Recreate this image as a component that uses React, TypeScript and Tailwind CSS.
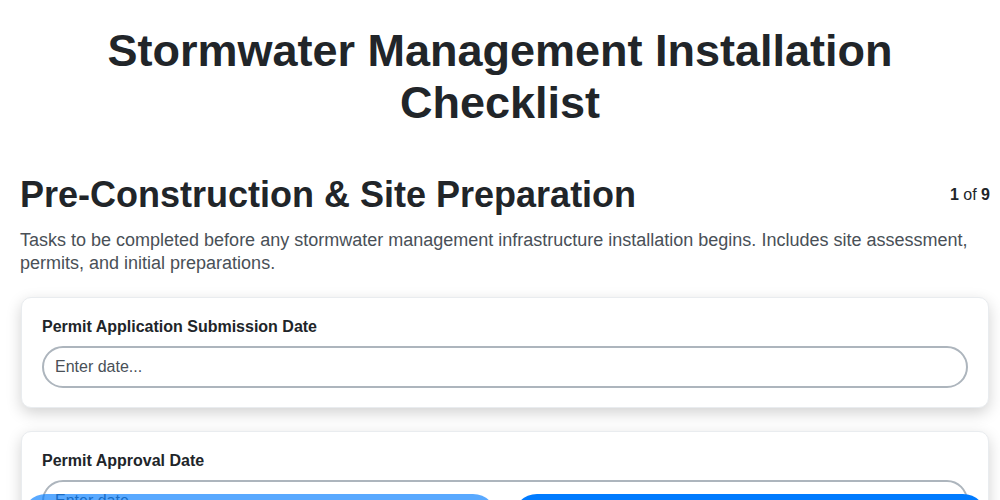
import React from "react";

function Field({ label }: { label: string }) {
  return (
    <div className="rounded-[10px] border border-[#e9ecef] bg-white px-5 pt-[17px] pb-[19px] shadow-[0_5px_15px_rgba(0,0,0,0.18)]">
      <label className="mb-[7px] block text-[16px] font-bold leading-6 text-[#212529]">{label}</label>
      <input
        type="text"
        placeholder="Enter date..."
        className="block h-[42px] w-full rounded-full border-2 border-[#adb5bd] bg-white px-[11px] text-[16px] text-[#212529] placeholder:text-[#495057] outline-none"
      />
    </div>
  );
}

export default function App() {
  return (
    <div className="min-h-screen bg-white font-['Liberation_Sans',Arial,sans-serif] text-[#212529]">
      <div className="px-5">
        <h1 className="mx-auto mt-[25px] max-w-[840px] text-center text-[45px] font-bold leading-[52px] text-[#212529]">
          Stormwater Management Installation Checklist
        </h1>
      </div>
      <div className="pl-5 pr-[10px] pb-24">
        <div className="mt-[44px] flex items-center justify-between">
          <h2 className="text-[36px] font-bold leading-[1.2] text-[#212529]">Pre-Construction &amp; Site Preparation</h2>
          <div className="text-[16px] text-[#212529]">
            <span className="font-bold">1</span> of <span className="font-bold">9</span>
          </div>
        </div>
        <p className="mt-[13px] text-[18px] leading-[23px] text-[#495057]">
          Tasks to be completed before any stormwater management infrastructure installation begins. Includes site assessment, permits, and initial preparations.
        </p>
        <div className="mt-[22px] flex flex-col gap-[23px] pl-px pr-[1px]">
          <Field label="Permit Application Submission Date" />
          <Field label="Permit Approval Date" />
          <Field label="Site Survey Completion Date" />
        </div>
      </div>
      <div className="fixed bottom-[-42px] left-0 right-0 flex gap-4 pl-[22px] pr-[13px]">
        <button className="h-12 flex-1 rounded-full bg-[#007bff] text-[16px] font-bold text-white opacity-65">Previous</button>
        <button className="h-12 flex-1 rounded-full bg-[#007bff] text-[16px] font-bold text-white">Next</button>
      </div>
    </div>
  );
}
